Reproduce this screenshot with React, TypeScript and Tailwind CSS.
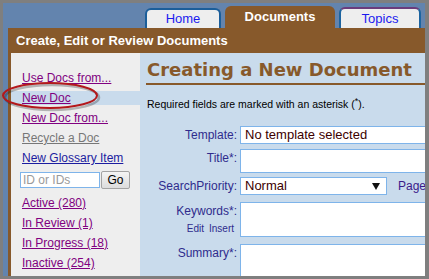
import React from "react";

// Left-hand navigation entries
const TOP_LINKS = [
  { label: "Use Docs from...", color: "text-[#800080]" },
  { label: "New Doc", color: "text-[#800080]", active: true },
  { label: "New Doc from...", color: "text-[#800080]" },
  { label: "Recycle a Doc", color: "text-[#777777]" },
  { label: "New Glossary Item", color: "text-[#1c1ca0]" },
];

const STATUS_LINKS = ["Active (280)", "In Review (1)", "In Progress (18)", "Inactive (254)"];

function Label({ children }: { children: React.ReactNode }) {
  return (
    <div className="w-[97px] shrink-0 text-right pt-[2px] text-[12px] leading-[14px] text-[#2f2b8c]">
      {children}
    </div>
  );
}

export default function App() {
  return (
    <div className="relative w-[429px] h-[279px] overflow-hidden bg-[#7f7f7f] pt-[3px] pl-[3px] pr-[4px] pb-[3px] font-['Liberation_Sans',Arial,sans-serif]">
      <div className="h-full flex flex-col bg-[#6384ae] pl-[5px]">
        {/* Tabs */}
        <div className="h-[25px] shrink-0 flex items-end gap-[4px] pl-[137px]">
          <div className="w-[76px] h-[20px] rounded-t-[6px] border-2 border-b-0 border-[#1b5e9a] bg-[#eeeeee] flex items-center justify-center text-[13px] text-[#1a1aee]">
            Home
          </div>
          <div className="w-[110px] h-[22px] rounded-t-[6px] bg-[#87592b] flex items-center justify-center text-[13px] font-bold text-white">
            Documents
          </div>
          <div className="w-[82px] h-[21px] rounded-t-[6px] border-2 border-b-0 border-[#1d64a0] border-t-[#6b3c7c] bg-[#eeeeee] flex items-center justify-center text-[13px] text-[#1a1aee]">
            Topics
          </div>
        </div>

        {/* Panel */}
        <div className="flex-1 flex flex-col bg-[#87592b] min-h-0">
          <div className="h-[25px] shrink-0 flex items-center pl-[8px] text-[13px] font-bold text-white">
            Create, Edit or Review Documents
          </div>
          <div className="flex-1 flex min-h-0 border-l-[3px] border-[#87592b]">
            {/* Sidebar */}
            <div className="w-[129px] shrink-0 bg-[#eeeeee] pt-[15px] text-[12px]">
              {TOP_LINKS.map((l) => (
                <div key={l.label} className="h-[20px] flex items-center">
                  <div className={`w-full h-[14px] flex items-center pl-[11px] ${l.active ? "bg-[#c9dbec]" : ""}`}>
                    <span className={`underline ${l.color}`}>{l.label}</span>
                  </div>
                </div>
              ))}
              <div className="flex items-center mt-[3px] pl-[9px]">
                <input
                  placeholder="ID or IDs"
                  className="w-[80px] h-[16px] border border-[#7eb4ea] bg-white px-[2px] text-[12px] placeholder:text-[#9a9a9a] outline-none"
                />
                <button className="ml-[1px] w-[29px] h-[18px] rounded-[2px] border border-[#a3a3a3] bg-gradient-to-b from-[#f4f4f4] to-[#dcdcdc] text-[12px] text-black leading-none">
                  Go
                </button>
              </div>
              <div className="mt-[4px]">
                {STATUS_LINKS.map((s) => (
                  <div key={s} className="h-[20px] flex items-center pl-[11px]">
                    <span className="underline text-[#800080]">{s}</span>
                  </div>
                ))}
              </div>
            </div>

            {/* Main */}
            <div className="flex-1 min-w-0 bg-[#c9dbec] overflow-hidden pt-[4px]">
              <div className="ml-[6px] h-[28px] border-b-2 border-[#87592b] pl-[1px] text-[18px] leading-[26px] font-bold text-[#87592b] font-['DejaVu_Sans',Verdana,sans-serif] whitespace-nowrap">
                Creating a New Document
              </div>
              <div className="pl-[7px] mt-[12px] text-[10.5px] leading-[14px] text-black whitespace-nowrap">
                Required fields are marked with an asterisk (<sup className="text-[9px]">*</sup>).
              </div>

              {/* Form */}
              <div className="mt-[15px] flex flex-col">
                <div className="flex items-start">
                  <Label>Template:</Label>
                  <div className="ml-[3px] w-[200px] shrink-0 h-[18px] border border-[#7eb4ea] bg-white pl-[4px] text-[13px] leading-[16px] text-[#3c0000] whitespace-nowrap">
                    No template selected
                  </div>
                </div>
                <div className="flex items-start mt-[5px]">
                  <Label>Title*:</Label>
                  <div className="ml-[3px] w-[200px] shrink-0 h-[24px] border border-[#7eb4ea] bg-white" />
                </div>
                <div className="flex items-start mt-[4px]">
                  <Label>SearchPriority:</Label>
                  <div className="ml-[3px] w-[147px] shrink-0 h-[18px] border border-[#7eb4ea] bg-white flex items-center pl-[4px] pr-[6px] text-[13px] text-[#3c0000]">
                    <span className="flex-1">Normal</span>
                    <svg width="8" height="7" viewBox="0 0 8 7">
                      <path d="M0 0 H8 L4 7 Z" fill="#111" />
                    </svg>
                  </div>
                  <div className="ml-[11px] pt-[2px] text-[12px] leading-[14px] text-[#3a1a8a] whitespace-nowrap">Page</div>
                </div>
                <div className="flex items-start mt-[7px]">
                  <div className="w-[97px] shrink-0 text-right text-[#2f2b8c]">
                    <div className="pt-[2px] text-[12px] leading-[14px]">Keywords*:</div>
                    <div className="mt-[5px] pr-[3px] text-[10px] leading-[12px] flex justify-end gap-[5px]">
                      <span>Edit</span>
                      <span>Insert</span>
                    </div>
                  </div>
                  <div className="ml-[3px] w-[200px] shrink-0 h-[35px] border border-[#7eb4ea] bg-white" />
                </div>
                <div className="flex items-start mt-[7px]">
                  <Label>Summary*:</Label>
                  <div className="ml-[3px] w-[200px] shrink-0 h-[60px] border border-[#7eb4ea] bg-white" />
                </div>
              </div>
            </div>
          </div>
        </div>
      </div>

      {/* Red callout around "New Doc" */}
      <svg className="absolute left-0 top-0 pointer-events-none" width="120" height="120">
        <ellipse cx="52" cy="97.5" rx="47" ry="12.5" fill="none" stroke="rgba(0,0,0,0.25)" strokeWidth="2.5" />
        <ellipse cx="50" cy="95.5" rx="47" ry="12.5" fill="none" stroke="#b3181b" strokeWidth="2" />
      </svg>
    </div>
  );
}
